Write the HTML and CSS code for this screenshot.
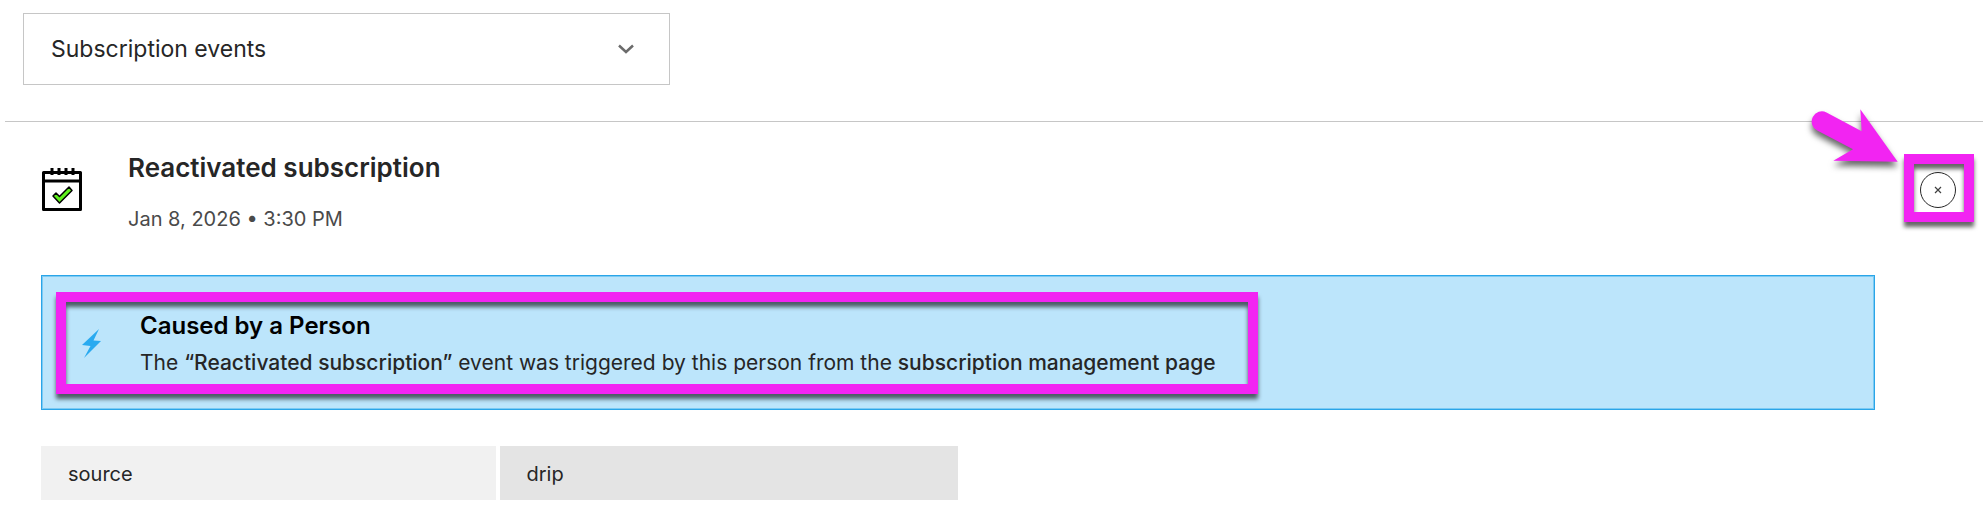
FILE: index.html
```
<!DOCTYPE html>
<html lang="en">
<head>
    <meta charset="UTF-8">
    <meta name="viewport" content="width=device-width, initial-scale=1.0">
    <title>Subscription events</title>
    <link rel="stylesheet" href="styles.css">
</head>
<body>
    <div class="filter">
        <select class="filter-select" aria-label="Event type">
            <option>Subscription events</option>
        </select>
        <svg class="filter-chevron" viewBox="0 0 16 10" aria-hidden="true">
            <path d="M1 1.5 L8 8 L15 1.5"/>
        </svg>
    </div>

    <div class="event">
        <div class="event-header">
            <svg class="event-icon" viewBox="0 0 42 46" aria-hidden="true">
                <path d="M2.5 5.5 H39.5 V42.5 H2.5 Z" fill="#fff" stroke="#000" stroke-width="3" stroke-linejoin="round"/>
                <path d="M2 14 H40" stroke="#000" stroke-width="3"/>
                <path d="M11 1 V8 M18 1 V8 M25 1 V8 M32 1 V8" stroke="#000" stroke-width="3"/>
                <path d="M12 29 L15 26 L18.5 29.5 L28 20 L31 23.5 L18.5 36 Z" fill="#5ef01c" stroke="#000" stroke-width="1.5" stroke-linejoin="round"/>
            </svg>
            <div class="event-info">
                <h2 class="event-title">Reactivated subscription</h2>
                <div class="event-date">Jan 8, 2026 • 3:30 PM</div>
            </div>
            <div class="event-close">
                <button class="close-button" type="button" aria-label="Close">
                    <svg class="close-icon" viewBox="0 0 8 8" aria-hidden="true">
                        <path d="M1 1 L7 7 M7 1 L1 7"/>
                    </svg>
                </button>
                <div class="highlight highlight-close"></div>
                <svg class="arrow" viewBox="0 0 90 56" aria-hidden="true">
                    <path d="M16.5 3.5 L51.7 22.3 L50.3 0.3 L87.7 52.7 L23.3 51.7 L43 40.3 L7.2 21.6 A10 10 0 0 1 16.5 3.5 Z"/>
                </svg>
            </div>
        </div>

        <div class="event-body">
            <div class="alert">
                <svg class="alert-icon" viewBox="0 0 20 30" aria-hidden="true">
                    <path d="M17 0 L0 16 L8.5 17 L2 29 L19 12 L11.5 11.5 Z"/>
                </svg>
                <div class="alert-text">
                    <h3 class="alert-title">Caused by a Person</h3>
                    <p class="alert-message">The <strong>“Reactivated subscription”</strong> event was triggered by this person from the <strong>subscription management page</strong></p>
                </div>
                <div class="highlight highlight-alert"></div>
            </div>

            <table class="properties">
                <tr>
                    <th scope="row">source</th>
                    <td>drip</td>
                </tr>
            </table>
        </div>
    </div>
</body>
</html>
```
FILE: styles.css
```
* {
    box-sizing: border-box;
}
body {
    margin: 0;
    padding: 13px 5px 0;
    background: #fff;
    color: #262626;
    font-family: Inter, "Liberation Sans", sans-serif;
    font-size: 20px;
    line-height: 26px;
}
.filter {
    position: relative;
    width: 33%;
    max-width: 647px;
    margin-left: 18px;
}
.filter-select {
    display: block;
    width: 100%;
    height: 72px;
    padding: 0 27px;
    border: 1px solid #c6c6c6;
    border-radius: 0;
    background: #fff;
    color: #262626;
    font-family: inherit;
    font-size: 23px;
    appearance: none;
}
.filter-chevron {
    position: absolute;
    top: 31px;
    right: 36px;
    width: 16px;
    height: 10px;
    fill: none;
    stroke: #6b6b6b;
    stroke-width: 2.5;
    pointer-events: none;
}
.event {
    margin-top: 36px;
    padding: 30px 9px 0 36px;
    border-top: 1px solid #c6c6c6;
}
.event-header {
    display: flex;
    align-items: flex-start;
}
.event-icon {
    width: 42px;
    height: 46px;
    margin: 15px 45px 0 0;
}
.event-info {
    flex: 1;
}
.event-title {
    margin: 0 0 22px;
    font-size: 26px;
    font-weight: 600;
    line-height: 32px;
}
.event-date {
    color: #4a4a4a;
}
.event-close {
    position: relative;
    margin-top: 20px;
    padding: 0 18px 0 16px;
}
.close-button {
    display: flex;
    align-items: center;
    justify-content: center;
    width: 36px;
    height: 36px;
    padding: 0;
    border: 1px solid #262626;
    border-radius: 50%;
    background: #fff;
}
.close-icon {
    width: 8px;
    height: 8px;
    stroke: #404040;
    stroke-width: 1.2;
}
.highlight {
    position: absolute;
    border: 10px solid #f224f2;
    filter: drop-shadow(0 5px 2px rgba(0, 0, 0, 0.6));
    pointer-events: none;
}
.highlight-close {
    top: -18px;
    right: 0;
    width: 70px;
    height: 68px;
}
.highlight-alert {
    top: 16px;
    left: 14px;
    width: 1202px;
    height: 102px;
}
.arrow {
    position: absolute;
    top: -63px;
    right: 74px;
    width: 90px;
    height: 56px;
    overflow: visible;
    fill: #f224f2;
    filter: drop-shadow(0 5px 3px rgba(0, 0, 0, 0.6));
}
.event-body {
    margin: 43px 99px 0 0;
}
.alert {
    position: relative;
    display: flex;
    align-items: center;
    padding: 36px 40px 33px;
    border: 1px solid #2aa5e8;
    box-shadow: inset 0 0 0 1px #7ccaf3;
    background: #bce5fb;
}
.alert-icon {
    width: 20px;
    height: 30px;
    margin-right: 38px;
    fill: #29aaf0;
}
.alert-title {
    margin: 0 0 10px;
    color: #000;
    font-size: 24px;
    font-weight: 600;
    line-height: 28px;
}
.alert-message {
    margin: 0;
    font-size: 21px;
}
.alert-message strong {
    font-weight: 500;
}
.properties {
    width: 50%;
    margin-top: 36px;
    border-spacing: 0;
    table-layout: fixed;
}
.properties th,
.properties td {
    padding: 15px 27px 13px;
    text-align: left;
    font-weight: 400;
}
.properties th {
    border-right: 4px solid #fff;
    background: #f1f1f1;
}
.properties td {
    background: #e4e4e4;
}
```
